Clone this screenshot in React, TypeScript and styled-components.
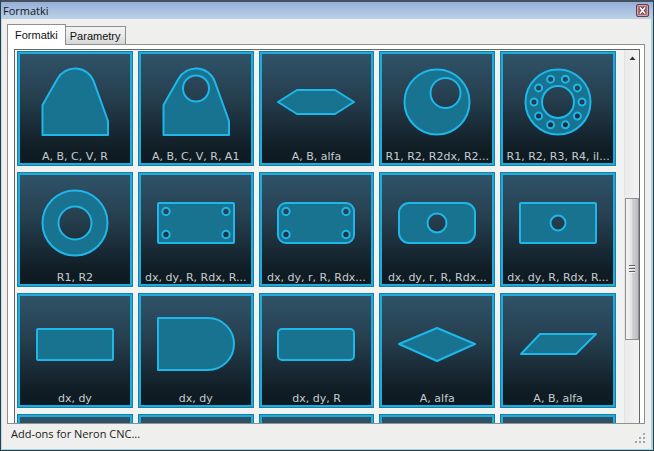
import React from "react";
import styled, { createGlobalStyle, css } from "styled-components";

const GlobalStyle = createGlobalStyle`
  *, *::before, *::after { box-sizing: border-box; }
  body { margin: 0; background: #efefee; }
  button { font: inherit; color: inherit; }
`;

const uiFont = css`font-family: "Open Sans", "Noto Sans", sans-serif;`;

const Window = styled.main`
  display: flex;
  flex-direction: column;
  height: 100vh;
  min-height: 200px;
  background: #efefee;
  border: 1px solid #24404d;
  border-top: 2px solid #46505a;
  box-shadow: inset 1px 0 #c5d6e4, inset -2px -1px #a9d3df;
  ${uiFont}
`;

const TitleBar = styled.header`
  display: flex;
  align-items: center;
  justify-content: space-between;
  flex: none;
  height: 17px;
  padding: 0 4px 0 2px;
  background: linear-gradient(#94aed8, #a9c1df 50%, #bad2e6);
`;

const Title = styled.h1`
  margin: 0;
  font-size: 11px;
  line-height: 16px;
  font-weight: 400;
  color: #14181e;
`;

const CloseButton = styled.button`
  display: flex;
  width: 13px;
  height: 13px;
  padding: 0;
  border: 0;
  background: none;
`;

const Tabs = styled.div`
  display: flex;
  align-items: flex-end;
  flex: none;
  height: 25px;
  padding: 0 6px;
  font-family: "Liberation Sans", Arial, sans-serif;
`;

const Tab = styled.button<{ $active?: boolean }>`
  padding: 0 4px;
  height: 18px;
  border: 1px solid #8e8f8f;
  border-left: 0;
  border-bottom: 0;
  font-size: 11px;
  line-height: 18px;
  color: #111;
  background: linear-gradient(#f3f3f3, #e9e9e9 50%, #d6d6d6);
  ${(p) =>
    p.$active &&
    css`
      position: relative;
      z-index: 1;
      height: 21px;
      margin-bottom: -1px;
      padding: 0 7px;
      border-left: 1px solid #8e8f8f;
      line-height: 20px;
      background: #fff;
    `}
`;

const TabPanel = styled.section`
  display: flex;
  flex: 1;
  min-height: 0;
  margin: 0 8px 0 6px;
  padding: 4px 4px 0 6px;
  border: 1px solid #8e8f8f;
  background: #fff;
`;

const ListBox = styled.div`
  display: flex;
  flex: 1;
  min-width: 0;
  border: 1px solid #63686b;
  border-bottom: 0;
  background: #f1f3f2;
`;

const Viewport = styled.div`
  flex: 1;
  min-width: 0;
  overflow: hidden;
  padding: 1px 8px 0 2px;
`;

const Grid = styled.div`
  display: grid;
  grid-template-columns: repeat(5, minmax(0, 1fr));
  gap: 6px 5px;
`;

const Tile = styled.button`
  display: flex;
  flex-direction: column;
  align-items: center;
  height: 115px;
  padding: 11px 0 0;
  border: 0;
  background: linear-gradient(#30546a, #263f4f 40%, #101d25 85%, #0e1920);
  box-shadow: inset 0 0 0 1px #177fa4, inset 0 0 0 3px #1fabdc;
`;

const Drawing = styled.svg`
  flex: none;
  width: 80px;
  height: 80px;
  fill: #17738f;
  fill-rule: evenodd;
  stroke: #1fb6ea;
  stroke-width: 2;
  stroke-linejoin: round;
`;

const Label = styled.span`
  margin-top: 8px;
  font-family: "DejaVu Sans", Verdana, sans-serif;
  font-size: 11px;
  line-height: 14px;
  white-space: nowrap;
  color: #c3cdd1;
`;

const ScrollBar = styled.div`
  display: flex;
  flex-direction: column;
  flex: none;
  width: 15px;
  border-left: 1px solid #e3e3e3;
  background: linear-gradient(90deg, #eaeaea, #f3f3f3);
`;

const ScrollUp = styled.button`
  display: flex;
  align-items: center;
  justify-content: center;
  height: 16px;
  padding: 0;
  border: 0;
  background: none;
`;

const TrackPart = styled.div<{ $share: number }>`
  flex: ${(p) => p.$share} 1 0;
`;

const Thumb = styled.div<{ $share: number }>`
  display: flex;
  align-items: center;
  justify-content: center;
  flex: ${(p) => p.$share} 1 0;
  border: 1px solid #8f9193;
  background: linear-gradient(90deg, #f4f4f4, #e5e5e5 45%, #cfcfd1 55%, #bcbcbf);
`;

const StatusBar = styled.footer`
  display: flex;
  align-items: center;
  justify-content: space-between;
  flex: none;
  height: 26px;
  padding: 0 7px 6px 10px;
  font-size: 11px;
  line-height: 16px;
  color: #1b1b1b;
`;

const Grip = styled.svg`
  align-self: flex-end;
`;

const circle = (x: number, y: number, r: number) =>
  `M${x - r} ${y}a${r} ${r} 0 1 0 ${2 * r} 0a${r} ${r} 0 1 0 ${-2 * r} 0z`;

const box = (x: number, y: number, w: number, h: number, r: number) =>
  `M${x + r} ${y}h${w - 2 * r}a${r} ${r} 0 0 1 ${r} ${r}v${h - 2 * r}a${r} ${r} 0 0 1 ${-r} ${r}` +
  `h${2 * r - w}a${r} ${r} 0 0 1 ${-r} ${-r}v${2 * r - h}a${r} ${r} 0 0 1 ${r} ${-r}z`;

const corners = [
  [10, 28.5],
  [70, 28.5],
  [10, 51.5],
  [70, 51.5],
].map(([x, y]) => circle(x, y, 3.7)).join("");

const boltHoles = Array.from({ length: 10 }, (_, i) => {
  const a = (i * Math.PI) / 5;
  return circle(40 + 24 * Math.cos(a), 40 + 24 * Math.sin(a), 3.5);
}).join("");

const bracket = "M7.5 73V43L22.5 16.7A20 20 0 0 1 58.8 19.6L73 59V73z";

const shapes: { label: string; d: string }[] = [
  { label: "A, B, C, V, R", d: bracket },
  { label: "A, B, C, V, R, A1", d: bracket + circle(40, 26.5, 13) },
  { label: "A, B, alfa", d: "M2 40L21 28H59L78 40L59 52H21z" },
  { label: "R1, R2, R2dx, R2...", d: circle(40, 40, 32.5) + circle(48.5, 31, 15) },
  { label: "R1, R2, R3, R4, il...", d: circle(40, 40, 32.5) + circle(40, 40, 16) + boltHoles },
  { label: "R1, R2", d: circle(40, 40, 32.5) + circle(40, 40, 16.5) },
  { label: "dx, dy, R, Rdx, R...", d: box(2, 20, 76, 40, 1) + corners },
  { label: "dx, dy, r, R, Rdx...", d: box(2, 20, 76, 40, 8) + corners },
  { label: "dx, dy, r, R, Rdx...", d: box(2, 20, 76, 40, 10) + circle(40, 40, 9.5) },
  { label: "dx, dy, R, Rdx, R...", d: box(2, 20, 76, 40, 1) + circle(40, 40, 7.5) },
  { label: "dx, dy", d: box(2, 25, 76, 31, 1) },
  { label: "dx, dy", d: "M2 14H52A26 26 0 0 1 52 66H2z" },
  { label: "dx, dy, R", d: box(2, 25, 76, 31, 4) },
  { label: "A, alfa", d: "M2 40L40 24L78 40L40 57z" },
  { label: "A, B, alfa", d: "M3 50L22 30H78L58 50z" },
];

const nextRow = [0, 1, 2, 3, 4];

export default function App() {
  return (
    <>
      <GlobalStyle />
      <Window>
        <TitleBar>
          <Title>Formatki</Title>
          <CloseButton type="button" aria-label="Close">
            <svg width="13" height="13" viewBox="0 0 13 13">
              <rect x="0.5" y="0.5" width="12" height="12" rx="1.5" fill="#a8707a" stroke="#6d3a47" />
              <rect x="1.5" y="1.5" width="10" height="10" rx="1" fill="none" stroke="#cfaab0" />
              <path d="M4 3.5L9 9.5M9 3.5L4 9.5" stroke="#70303c" strokeWidth="3.4" />
              <path d="M4 3.5L9 9.5M9 3.5L4 9.5" stroke="#fff" strokeWidth="1.8" />
            </svg>
          </CloseButton>
        </TitleBar>
        <Tabs role="tablist">
          <Tab type="button" role="tab" id="tab-formatki" aria-selected="true" aria-controls="panel-formatki" $active>
            Formatki
          </Tab>
          <Tab type="button" role="tab" aria-selected="false">
            Parametry
          </Tab>
        </Tabs>
        <TabPanel role="tabpanel" id="panel-formatki" aria-labelledby="tab-formatki">
          <ListBox>
            <Viewport id="shape-list">
              <Grid>
                {shapes.map((s, i) => (
                  <Tile type="button" key={i}>
                    <Drawing viewBox="0 0 80 80" aria-hidden="true">
                      <path d={s.d} />
                    </Drawing>
                    <Label>{s.label}</Label>
                  </Tile>
                ))}
                {nextRow.map((i) => (
                  <Tile type="button" key={`next-${i}`} tabIndex={-1} aria-hidden="true" />
                ))}
              </Grid>
            </Viewport>
            <ScrollBar
              role="scrollbar"
              aria-controls="shape-list"
              aria-orientation="vertical"
              aria-valuemin={0}
              aria-valuemax={100}
              aria-valuenow={61}
            >
              <ScrollUp type="button" aria-label="Scroll up">
                <svg width="7" height="4" viewBox="0 0 7 4">
                  <path d="M0.5 4L3.5 0.5L6.5 4z" fill="#303030" />
                </svg>
              </ScrollUp>
              <TrackPart $share={133} />
              <Thumb $share={141}>
                <svg width="6" height="8" viewBox="0 0 6 8" shapeRendering="crispEdges">
                  <path d="M0 0.5H6M0 3.5H6M0 6.5H6" stroke="#5c5e60" />
                  <path d="M0 1.5H6M0 4.5H6M0 7.5H6" stroke="#f2f2f2" />
                </svg>
              </Thumb>
              <TrackPart $share={83} />
            </ScrollBar>
          </ListBox>
        </TabPanel>
        <StatusBar>
          <span>Add-ons for Neron CNC...</span>
          <Grip width="11" height="11" viewBox="0 0 11 11" shapeRendering="crispEdges" aria-hidden="true">
            <path
              d="M8 0h2v2h-2zM4 4h2v2h-2zM8 4h2v2h-2zM0 8h2v2h-2zM4 8h2v2h-2zM8 8h2v2h-2z"
              fill="#a3a6a6"
            />
          </Grip>
        </StatusBar>
      </Window>
    </>
  );
}
